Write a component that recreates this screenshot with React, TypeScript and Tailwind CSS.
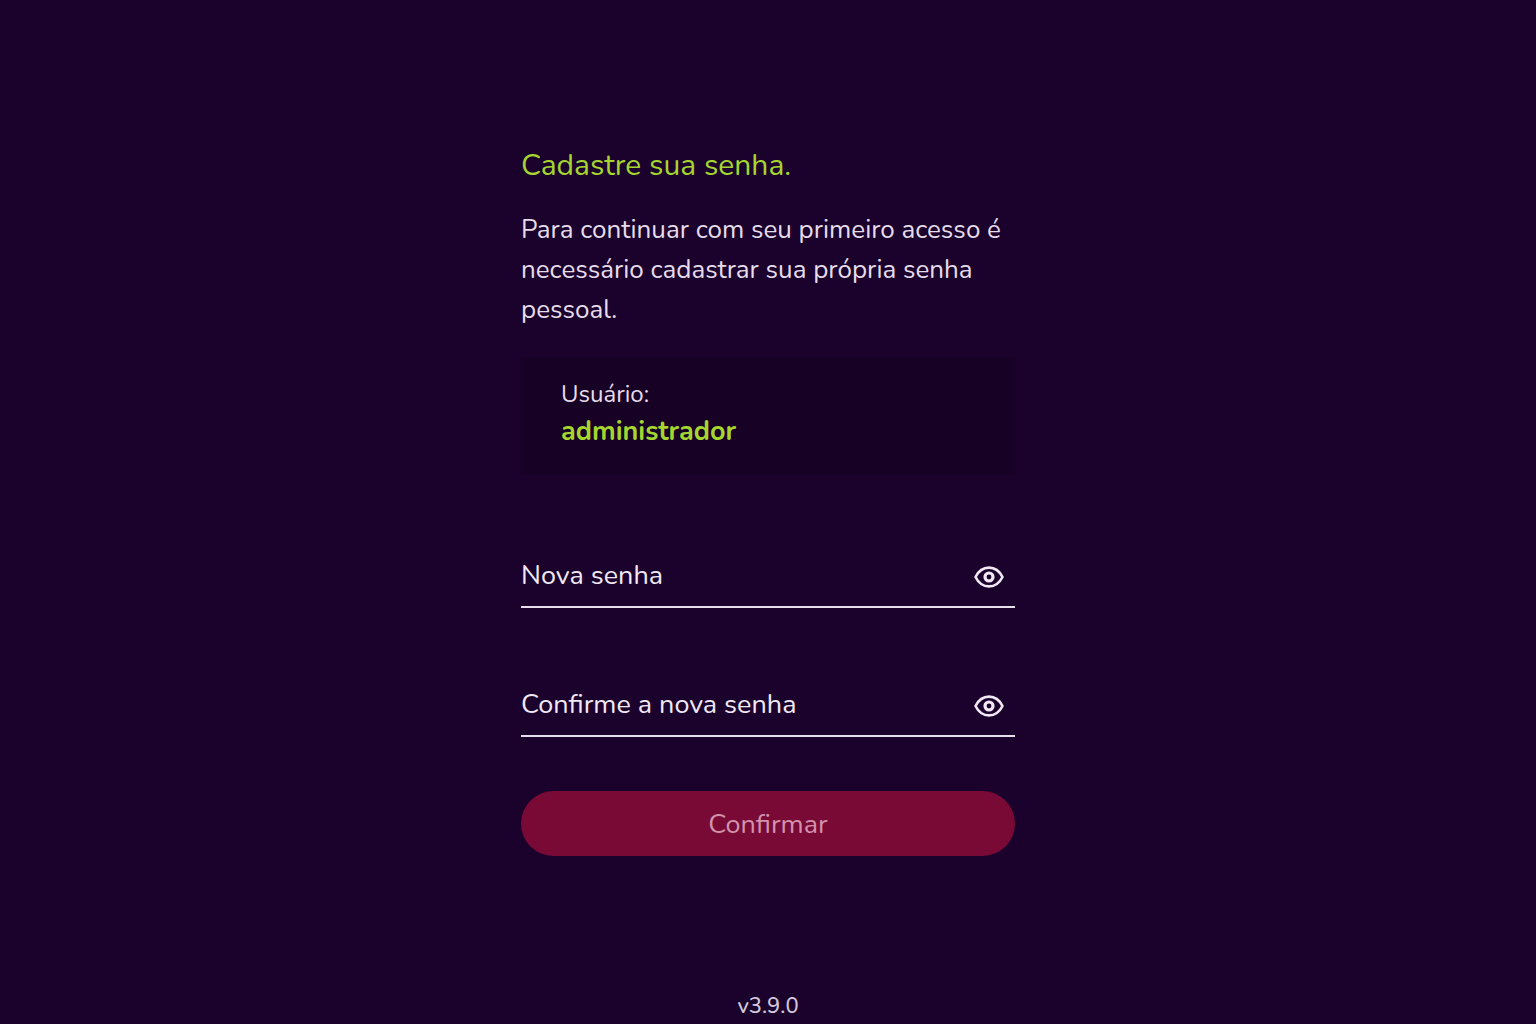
import { useState } from "react";

function EyeIcon() {
  return (
    <svg viewBox="0 0 30 22" className="h-[22px] w-[30px]" fill="none" stroke="currentColor" aria-hidden="true">
      <path
        d="M1.500 11C4.500 5 9.300 1.600 15 1.600S25.500 5 28.500 11C25.500 17 20.700 20.400 15 20.400S4.500 17 1.500 11Z"
        strokeWidth="2.600"
        strokeLinejoin="round"
      />
      <circle cx="15" cy="11" r="4" strokeWidth="3.200" />
    </svg>
  );
}

function PasswordField({ id, label }: { id: string; label: string }) {
  const [visible, setVisible] = useState(false);
  return (
    <div className="relative flex h-16 items-center border-b-2 border-[#e6dfea]">
      <input
        id={id}
        type={visible ? "text" : "password"}
        placeholder=" "
        className="peer h-full min-w-0 flex-1 bg-transparent text-[27px] outline-none"
      />
      {/* Sits over the empty field and moves above it once the field is in use. */}
      <label
        htmlFor={id}
        className="pointer-events-none absolute inset-x-0 -top-6 text-base leading-6 text-[#f0e8f4] peer-placeholder-shown:peer-not-focus:top-0 peer-placeholder-shown:peer-not-focus:text-[27px] peer-placeholder-shown:peer-not-focus:leading-[64px]"
      >
        {label}
      </label>
      <button
        type="button"
        aria-label="Mostrar senha"
        aria-pressed={visible}
        onClick={() => setVisible(!visible)}
        className="mr-[11px] pt-1 text-[#f0e8f2]"
      >
        <EyeIcon />
      </button>
    </div>
  );
}

export default function App() {
  return (
    <div className="flex min-h-screen flex-col items-center bg-[#1a022d] font-['Nunito','Noto_Sans',sans-serif] text-[#e6dcea]">
      <main className="w-full max-w-[494px] pt-[146px]">
        <h1 className="text-[30px] leading-10 text-[#a5d62f]">Cadastre sua senha.</h1>
        <p className="mt-6 text-[26px] leading-10">
          Para continuar com seu primeiro acesso é necessário cadastrar sua própria senha pessoal.
        </p>
        <section className="mt-[27px] rounded bg-[#170125] px-10 pt-[18px] pb-6">
          <p className="text-2xl leading-[38px]">Usuário:</p>
          <p className="text-[27px] leading-[38px] font-bold text-[#a5d62f]">administrador</p>
        </section>
        <form className="mt-[69px]" onSubmit={(e) => e.preventDefault()}>
          <div className="flex flex-col gap-[65px]">
            <PasswordField id="nova" label="Nova senha" />
            <PasswordField id="confirma" label="Confirme a nova senha" />
          </div>
          <button
            type="submit"
            className="mt-[54px] h-[65px] w-full rounded-full bg-[#780a35] pt-1 text-[27px] text-[#d391ab]"
          >
            Confirmar
          </button>
        </form>
      </main>
      <footer className="mt-auto text-[22px] leading-9 font-medium text-[#d3c8da]">v3.9.0</footer>
    </div>
  );
}
